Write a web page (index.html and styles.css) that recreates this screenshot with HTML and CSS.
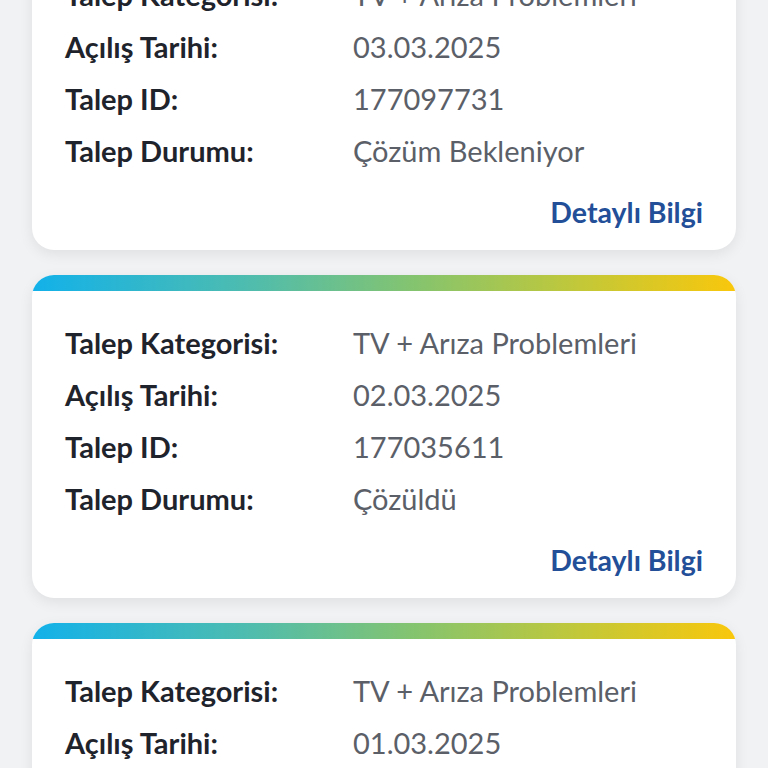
FILE: index.html
```html
<!DOCTYPE html>
<html lang="tr">
<head>
<meta charset="utf-8">
<link rel="stylesheet" href="styles.css">
</head>
<body>
<div class="list">
  <div class="card first">
    <div class="bar"></div>
    <div class="body">
      <div class="row"><span class="label">Talep Kategorisi:</span><span class="value">TV + Arıza Problemleri</span></div>
      <div class="row"><span class="label">Açılış Tarihi:</span><span class="value">03.03.2025</span></div>
      <div class="row"><span class="label">Talep ID:</span><span class="value">177097731</span></div>
      <div class="row"><span class="label">Talep Durumu:</span><span class="value">Çözüm Bekleniyor</span></div>
      <div class="more"><a class="link">Detaylı Bilgi</a></div>
    </div>
  </div>
  <div class="card">
    <div class="bar"></div>
    <div class="body">
      <div class="row"><span class="label">Talep Kategorisi:</span><span class="value">TV + Arıza Problemleri</span></div>
      <div class="row"><span class="label">Açılış Tarihi:</span><span class="value">02.03.2025</span></div>
      <div class="row"><span class="label">Talep ID:</span><span class="value">177035611</span></div>
      <div class="row"><span class="label">Talep Durumu:</span><span class="value">Çözüldü</span></div>
      <div class="more"><a class="link">Detaylı Bilgi</a></div>
    </div>
  </div>
  <div class="card">
    <div class="bar"></div>
    <div class="body">
      <div class="row"><span class="label">Talep Kategorisi:</span><span class="value">TV + Arıza Problemleri</span></div>
      <div class="row"><span class="label">Açılış Tarihi:</span><span class="value">01.03.2025</span></div>
      <div class="row"><span class="label">Talep ID:</span><span class="value">176998402</span></div>
      <div class="row"><span class="label">Talep Durumu:</span><span class="value">Çözüldü</span></div>
      <div class="more"><a class="link">Detaylı Bilgi</a></div>
    </div>
  </div>
</div>
</body>
</html>
```
FILE: styles.css
```css
html, body {
  margin: 0;
  padding: 0;
  background: #f1f2f4;
  height: 768px;
  overflow: hidden;
}
body {
  font-family: "Lato", "Noto Sans", sans-serif;
}
.list {
  display: flex;
  flex-direction: column;
  gap: 25px;
  padding: 0 32px;
}
.card {
  background: #ffffff;
  border-radius: 22px;
  box-shadow: 0 4px 14px rgba(0, 0, 0, 0.08);
  overflow: hidden;
}
.card.first {
  margin-top: -73px;
}
.bar {
  height: 16px;
  background: linear-gradient(90deg, #12b1ea 0%, #4dbcb0 30%, #86c46d 55%, #c3c838 78%, #f9c70c 100%);
}
.body {
  padding: 25px 33px 18px 33px;
}
.row {
  display: flex;
  height: 52px;
  align-items: center;
  font-size: 29px;
}
.label {
  width: 288px;
  font-weight: 700;
  color: #1f242c;
}
.value {
  color: #5b6068;
  font-weight: 400;
}
.more {
  display: flex;
  justify-content: flex-end;
  height: 40px;
  align-items: center;
  margin-top: 16px;
}
.link {
  font-size: 28.5px;
  font-weight: 700;
  color: #234e98;
}
```
